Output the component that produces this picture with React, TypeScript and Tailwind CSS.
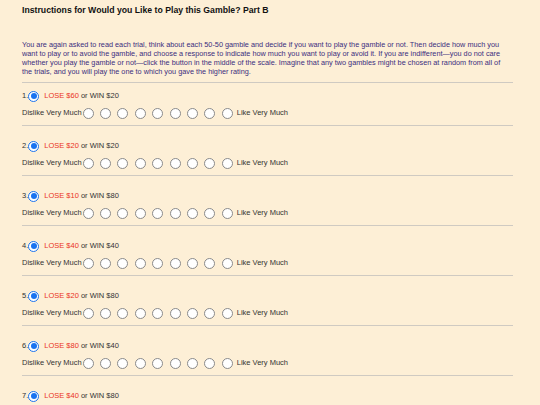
import React from 'react';

const trials = [
  { lose: 60, win: 20 },
  { lose: 20, win: 20 },
  { lose: 10, win: 80 },
  { lose: 40, win: 40 },
  { lose: 20, win: 80 },
  { lose: 80, win: 40 },
  { lose: 40, win: 80 },
];

const Radio = ({ checked = false }: { checked?: boolean }) =>
  checked ? (
    <span className="inline-flex h-[11px] w-[11px] shrink-0 items-center justify-center rounded-full border-[1.5px] border-[#1a73f0] bg-white">
      <span className="h-[6px] w-[6px] rounded-full bg-[#1a73f0]" />
    </span>
  ) : (
    <span className="inline-block h-[11px] w-[11px] shrink-0 rounded-full border border-[#8a8a8a] bg-white" />
  );

const Trial = ({ n, lose, win }: { n: number; lose: number; win: number }) => (
  <div className={`border-b border-[#cfcac2] pb-[6px] ${n === 1 ? 'pt-[7px]' : 'pt-[14px]'}`}>
    <div className="flex h-[12px] items-center text-[7.5px] text-[#333]">
      <span>{n}.</span>
      <Radio checked />
      <span className="ml-[5px] text-[#ea3323]">LOSE ${lose}</span>
      <span className="ml-[2px]">or WIN ${win}</span>
    </div>
    <div className="mt-[5px] flex h-[12px] items-center text-[7.5px] text-[#333]">
      <span className="mr-px">Dislike Very Much</span>
      <div className="flex items-center gap-[6.4px]">
        {Array.from({ length: 9 }).map((_, i) => (
          <Radio key={i} />
        ))}
      </div>
      <span className="ml-[4px]">Like Very Much</span>
    </div>
  </div>
);

export default function App() {
  return (
    <div
      className="h-[405px] overflow-hidden bg-[#fdefd6] px-[22px] pt-[4px]"
      style={{ fontFamily: '"Liberation Sans", Arial, sans-serif' }}
    >
      <div className="w-[491px]">
        <h1 className="text-[8.7px] font-bold leading-[12px] text-[#111]">
          Instructions for Would you Like to Play this Gamble? Part B
        </h1>
        <p className="mt-[24px] whitespace-nowrap border-b border-[#cfcac2] pb-[6px] text-[7.3px] leading-[9px] text-[#3b2e7e]">
          You are again asked to read each trial, think about each 50-50 gamble and decide if you want to play the gamble or not. Then decide how much you
          <br />
          want to play or to avoid the gamble, and choose a response to indicate how much you want to play or avoid it. If you are indifferent—you do not care
          <br />
          whether you play the gamble or not—click the button in the middle of the scale. Imagine that any two gambles might be chosen at random from all of
          <br />
          the trials, and you will play the one to which you gave the higher rating.
        </p>
        {trials.map((t, i) => (
          <Trial key={i} n={i + 1} lose={t.lose} win={t.win} />
        ))}
      </div>
    </div>
  );
}
